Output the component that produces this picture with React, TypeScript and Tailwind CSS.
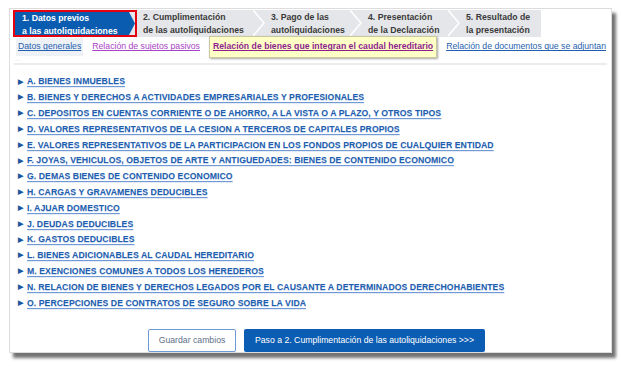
import { Fragment } from 'react'

const steps = [
  { n: '2. Cumplimentación', l2: 'de las autoliquidaciones', w: 'w-[128px]' },
  { n: '3. Pago de las', l2: 'autoliquidaciones', w: 'w-[97px]' },
  { n: '4. Presentación', l2: 'de la Declaración', w: 'w-[98px]' },
  { n: '5. Resultado de', l2: 'la presentación', w: 'w-[81px]' },
]

const items = [
  'A. BIENES INMUEBLES',
  'B. BIENES Y DERECHOS A ACTIVIDADES EMPRESARIALES Y PROFESIONALES',
  'C. DEPOSITOS EN CUENTAS CORRIENTE O DE AHORRO, A LA VISTA O A PLAZO, Y OTROS TIPOS',
  'D. VALORES REPRESENTATIVOS DE LA CESION A TERCEROS DE CAPITALES PROPIOS',
  'E. VALORES REPRESENTATIVOS DE LA PARTICIPACION EN LOS FONDOS PROPIOS DE CUALQUIER ENTIDAD',
  'F. JOYAS, VEHICULOS, OBJETOS DE ARTE Y ANTIGUEDADES: BIENES DE CONTENIDO ECONOMICO',
  'G. DEMAS BIENES DE CONTENIDO ECONOMICO',
  'H. CARGAS Y GRAVAMENES DEDUCIBLES',
  'I. AJUAR DOMESTICO',
  'J. DEUDAS DEDUCIBLES',
  'K. GASTOS DEDUCIBLES',
  'L. BIENES ADICIONABLES AL CAUDAL HEREDITARIO',
  'M. EXENCIONES COMUNES A TODOS LOS HEREDEROS',
  'N. RELACION DE BIENES Y DERECHOS LEGADOS POR EL CAUSANTE A DETERMINADOS DERECHOHABIENTES',
  'O. PERCEPCIONES DE CONTRATOS DE SEGURO SOBRE LA VIDA',
]

function Chevron() {
  // white separator between the step tabs
  return (
    <svg className="absolute right-0 top-0" width="12" height="26" viewBox="0 0 12 26">
      <polyline points="0,0 11,13 0,26" fill="none" stroke="#ffffff" strokeWidth="1.5" />
    </svg>
  )
}

export default function App() {
  return (
    <div className="w-[621px] h-[366px] bg-white pt-[8px] pl-[9px] font-['Liberation_Sans',Arial,sans-serif] text-[8.7px]">
      <div className="w-[603px] h-[345px] bg-white border border-[#dcdcdc] shadow-[4px_5px_3px_rgba(0,0,0,0.55)] flex flex-col">
        {/* steps */}
        <div className="pl-[3px] pt-[1px]">
          <div className="flex w-[528px] h-[27px] bg-[#e4e6e9] font-bold leading-[13px] text-[#3a3a3a]">
            <div className="w-[124px] h-[27px] border-2 border-[#e3000f] bg-[#e4e6e9]">
              <div className="h-full bg-[#0a5cb0] text-white pl-[7px] [clip-path:polygon(0_0,114px_0,120px_50%,114px_100%,0_100%)]">
                <div>1. Datos previos</div>
                <div>a las autoliquidaciones</div>
              </div>
            </div>
            {steps.map((s, i) => (
              <div key={s.n} className={`relative h-[27px] pt-[1px] pl-[6px] ${s.w}`}>
                <div>{s.n}</div>
                <div>{s.l2}</div>
                {i < steps.length - 1 && <Chevron />}
              </div>
            ))}
          </div>
        </div>

        {/* sub tabs */}
        <div className="flex items-center h-[20px] pl-[6px] gap-[7px] text-[#1f5fae]">
          <span className="bg-[#eef1f5] px-[2px] py-[2px] underline">Datos generales</span>
          <span className="px-[2px] text-[#a743c4] underline">Relación de sujetos pasivos</span>
          <span className="bg-[#ffffc6] border border-[#c9c9a0] shadow-[1px_1px_2px_rgba(0,0,0,0.35)] px-[3px] py-[3px] font-bold text-[#8e1e8e] underline">Relación de bienes que integran el caudal hereditario</span>
          <span className="px-[2px] underline">Relación de documentos que se adjuntan</span>
        </div>
        <div className="pl-[5px] h-[6px] leading-[4px] text-[#cfcfcf] text-[6px]">...</div>
        <div className="mx-[4px] h-[2px] bg-[#ececec]" />

        {/* list */}
        <div className="pt-[9px] pl-[8px] flex flex-col">
          {items.map((t) => (
            <Fragment key={t}>
              <div className="flex items-center h-[15.8px] font-bold text-[#1f5fae] tracking-[0.05px]">
                <span className="text-[7px] text-[#1c55a0] w-[9px]">▶</span>
                <span className="underline decoration-[#6f9ad6] underline-offset-[1.5px] [text-shadow:0_0.5px_0_rgba(110,150,215,0.35)]">{t}</span>
              </div>
            </Fragment>
          ))}
        </div>

        {/* actions */}
        <div className="mt-auto mb-[0px] flex justify-center gap-[8px] pl-[12px] text-[8.7px]">
          <button className="w-[88px] h-[23px] border border-[#6d9ad6] rounded-[2px] bg-white text-[#5d6f88]">Guardar cambios</button>
          <button className="w-[241px] h-[23px] rounded-[2px] bg-[#0b5db3] text-white">Paso a 2. Cumplimentación de las autoliquidaciones &gt;&gt;&gt;</button>
        </div>
      </div>
    </div>
  )
}
